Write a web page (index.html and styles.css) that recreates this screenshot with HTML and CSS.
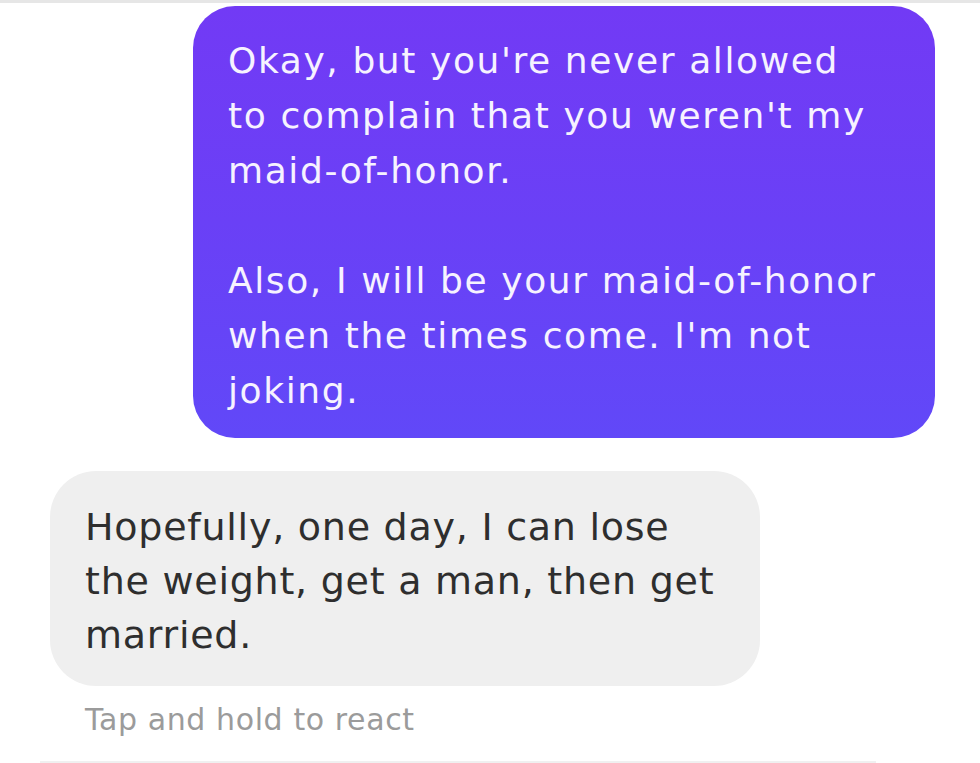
FILE: index.html
```html
<!DOCTYPE html>
<html>
<head>
<meta charset="utf-8">
<link rel="stylesheet" href="styles.css">
</head>
<body>
<div class="screen">
  <div class="topbar"></div>
  <div class="row row-out">
    <div class="bubble bubble-out">Okay, but you're never allowed<br>to complain that you weren't my<br>maid-of-honor.<br><br>Also, I will be your maid-of-honor<br>when the times come. I'm not<br>joking.</div>
  </div>
  <div class="row row-in">
    <div class="bubble bubble-in">Hopefully, one day, I can lose<br>the weight, get a man, then get<br>married.</div>
  </div>
  <div class="hint">Tap and hold to react</div>
  <div class="bottomline"></div>
</div>
</body>
</html>
```
FILE: styles.css
```css
html, body {
  margin: 0;
  padding: 0;
  background: #ffffff;
}
.screen {
  width: 980px;
  height: 763px;
  overflow: hidden;
  font-family: "DejaVu Sans", "Open Sans", sans-serif;
  display: flex;
  flex-direction: column;
}
.topbar {
  height: 3px;
  background: #e6e6e6;
}
.row {
  display: flex;
}
.row-out {
  margin-top: 3px;
  padding-left: 193px;
}
.row-in {
  margin-top: 33px;
  padding-left: 50px;
}
.bubble {
  box-sizing: border-box;
  white-space: nowrap;
}
.bubble-out {
  width: 742px;
  padding: 27px 20px 20px 35px;
  border-radius: 42px;
  background: linear-gradient(180deg, #723af5 0%, #6a40f6 50%, #6148f8 100%);
  color: #f6f2ff;
  font-size: 36px;
  line-height: 55px;
  letter-spacing: 1.6px;
}
.bubble-in {
  width: 710px;
  padding: 29px 20px 24px 35px;
  border-radius: 46px;
  background: #efefef;
  color: #2e2e2e;
  font-size: 38px;
  line-height: 54px;
  letter-spacing: 0.75px;
}
.hint {
  margin-top: 17px;
  padding-left: 85px;
  font-size: 30px;
  line-height: 34px;
  letter-spacing: 0.6px;
  color: #9b9b9b;
}
.bottomline {
  margin-top: auto;
  margin-left: 40px;
  width: 836px;
  height: 2px;
  background: #f0f0f0;
}
```
